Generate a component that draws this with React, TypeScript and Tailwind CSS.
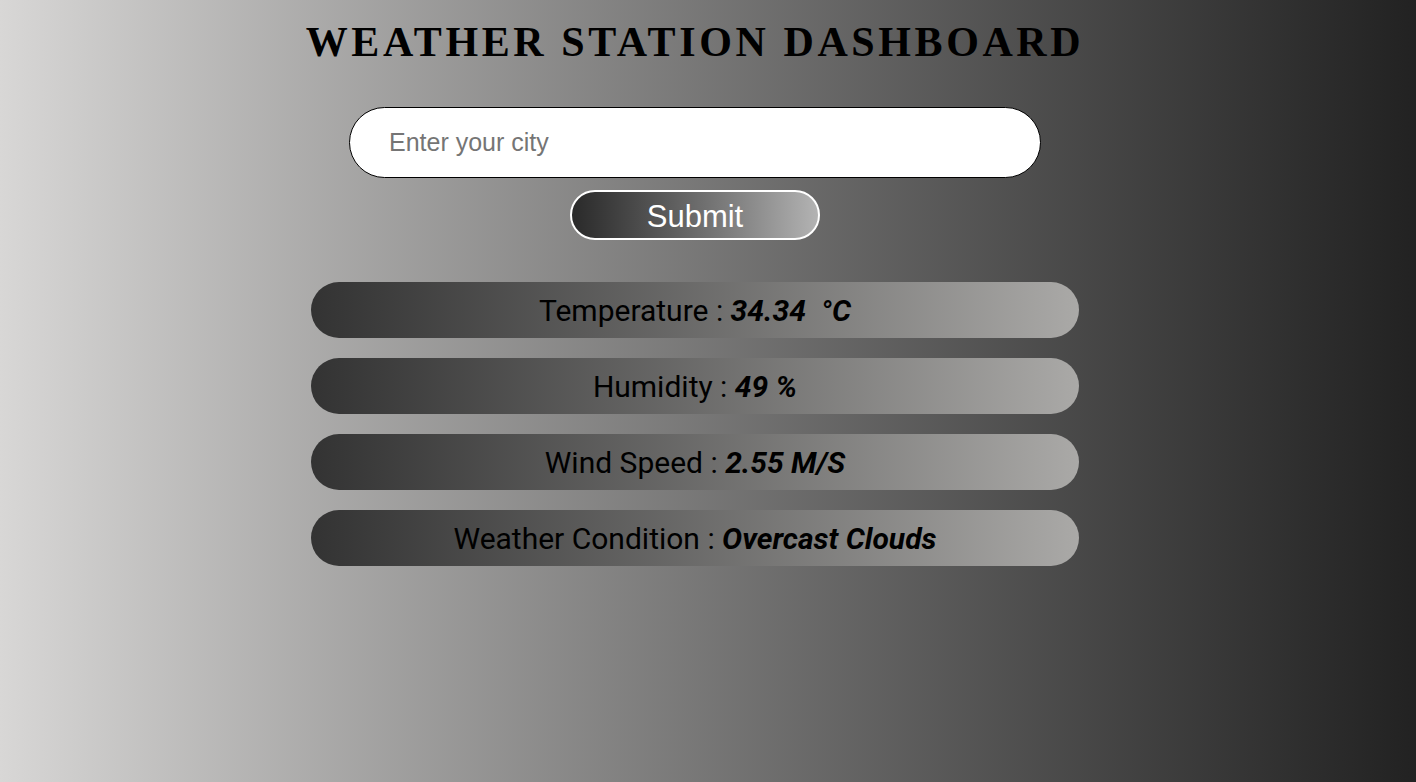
import React from "react";

const rows = [
  { label: "Temperature", value: "34.34  °C" },
  { label: "Humidity", value: "49 %" },
  { label: "Wind Speed", value: "2.55 M/S" },
  { label: "Weather Condition", value: "Overcast Clouds" },
];

export default function App() {
  return (
    <div className="min-h-[782px] w-full bg-gradient-to-r from-[#d8d7d6] to-[#222222] flex flex-col items-center pr-[26px] pt-[16px]">
      <h1 className="m-0 text-[42px] leading-[52px] font-bold uppercase tracking-[3.6px] text-black [font-family:'Liberation_Serif',serif]">
        Weather Station Dashboard
      </h1>
      <input
        autoFocus
        type="text"
        placeholder="Enter your city"
        className="mt-[39px] w-[692px] h-[71px] rounded-[36px] border border-black bg-white pl-[39px] text-[25px] text-black placeholder:text-[#757575] outline-none [font-family:'Liberation_Sans',Arial,sans-serif]"
      />
      <button className="mt-[12px] w-[250px] h-[50px] rounded-[25px] border-2 border-white bg-gradient-to-r from-[#2a2a2a] to-[#b3b3b3] text-white text-[31px] leading-none pt-[3px] [font-family:'Liberation_Sans',Arial,sans-serif]">
        Submit
      </button>
      <div className="mt-[42px] flex flex-col gap-[20px]">
        {rows.map((r) => (
          <div
            key={r.label}
            className="w-[768px] h-[56px] rounded-[28px] bg-gradient-to-r from-[#333333] to-[#aaa9a7] flex items-center justify-center text-black text-[30px] [font-family:Roboto,'Liberation_Sans',sans-serif]"
          >
            <span className="font-normal">{r.label} :&nbsp;</span>
            <span className="font-bold italic whitespace-pre">{r.value}</span>
          </div>
        ))}
      </div>
    </div>
  );
}
